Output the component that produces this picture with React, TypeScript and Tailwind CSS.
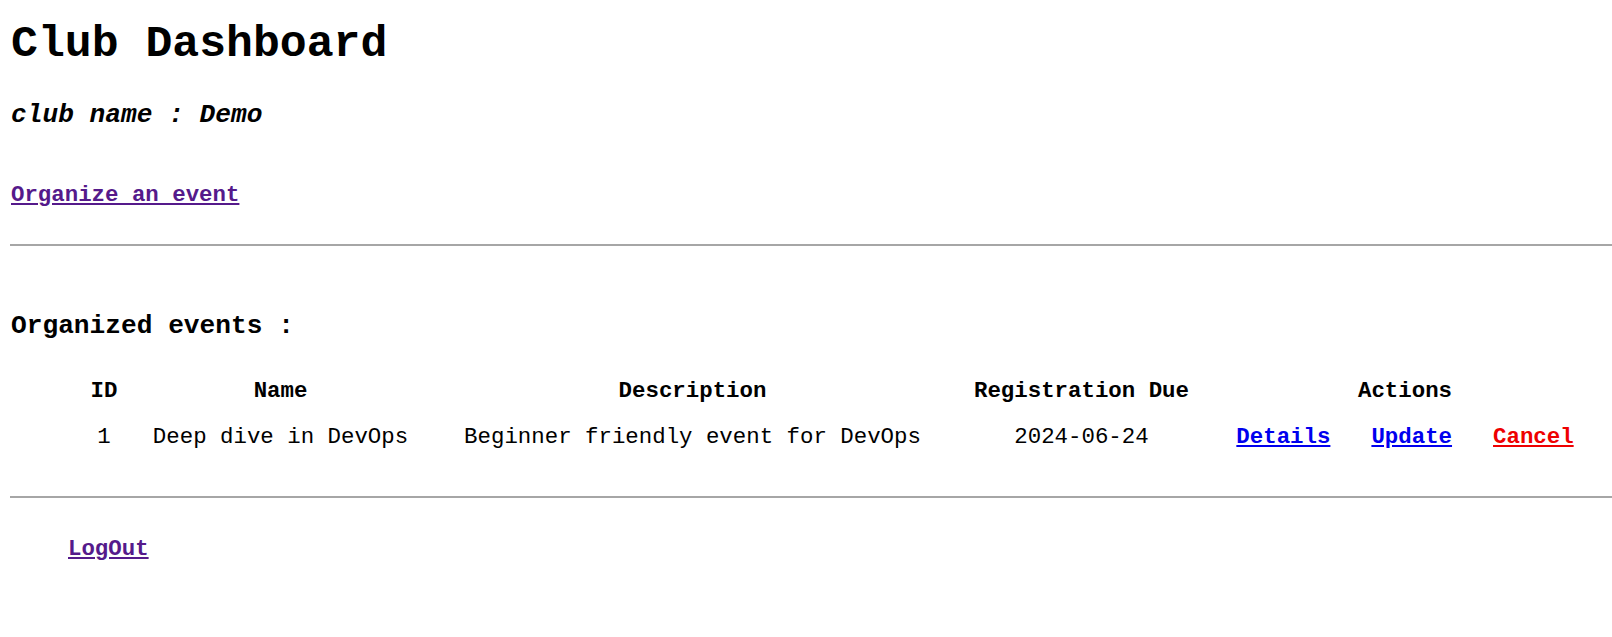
const mono = { fontFamily: '"Liberation Mono", "Courier New", monospace' };

export default function App() {
  const events = [
    {
      id: 1,
      name: 'Deep dive in DevOps',
      description: 'Beginner friendly event for DevOps',
      due: '2024-06-24',
    },
  ];

  return (
    <div
      className="min-h-screen overflow-hidden bg-white pl-[11px] text-black"
      style={mono}
    >
      <h1 className="mt-[17px] text-[44.8px] font-bold leading-[54px]">Club Dashboard</h1>
      <h3 className="mt-[29px] text-[26.2px] font-bold italic leading-[31px]">
        club name : Demo
      </h3>
      <div className="mt-[51px] text-[22.4px] font-bold leading-[27px]">
        <a href="#" className="text-[#551a8b] underline">
          Organize an event
        </a>
      </div>
      <hr className="-ml-px mt-[35px] w-[calc(100%+1px)] border-0 border-t-2 border-[#a6a6a6]" />

      <h3 className="mt-[65px] text-[26.2px] font-bold leading-[31px]">Organized events :</h3>

      <table className="ml-[72px] mt-[26px] table-fixed border-collapse text-[22.4px] leading-[27px]">
        <colgroup>
          <col className="w-[42px]" />
          <col className="w-[311px]" />
          <col className="w-[513px]" />
          <col className="w-[265px]" />
          <col className="w-[382px]" />
        </colgroup>
        <thead>
          <tr>
            <th className="pt-[10px] pb-[9px] text-center font-bold">ID</th>
            <th className="pt-[10px] pb-[9px] text-center font-bold">Name</th>
            <th className="pt-[10px] pb-[9px] text-center font-bold">Description</th>
            <th className="pt-[10px] pb-[9px] text-center font-bold whitespace-nowrap">
              Registration Due
            </th>
            <th className="pt-[10px] pb-[9px] text-center font-bold">Actions</th>
          </tr>
        </thead>
        <tbody>
          {events.map((ev) => (
            <tr key={ev.id}>
              <td className="pt-[10px] pb-[10px] text-center">{ev.id}</td>
              <td className="pt-[10px] pb-[10px] text-center whitespace-nowrap">{ev.name}</td>
              <td className="pt-[10px] pb-[10px] text-center whitespace-nowrap">
                {ev.description}
              </td>
              <td className="pt-[10px] pb-[10px] text-center">{ev.due}</td>
              <td className="pt-[10px] pb-[10px]">
                <div className="flex justify-center gap-[41px] font-bold whitespace-nowrap">
                  <a href="#" className="text-[#0000ee] underline">
                    Details
                  </a>
                  <a href="#" className="text-[#0000ee] underline">
                    Update
                  </a>
                  <a href="#" className="text-[#ee0000] underline">
                    Cancel
                  </a>
                </div>
              </td>
            </tr>
          ))}
        </tbody>
      </table>

      <hr className="-ml-px mt-[35px] w-[calc(100%+1px)] border-0 border-t-2 border-[#a6a6a6]" />

      <div className="ml-[57px] mt-[38px] text-[22.4px] font-bold leading-[27px]">
        <a href="#" className="text-[#551a8b] underline">
          LogOut
        </a>
      </div>
    </div>
  );
}
